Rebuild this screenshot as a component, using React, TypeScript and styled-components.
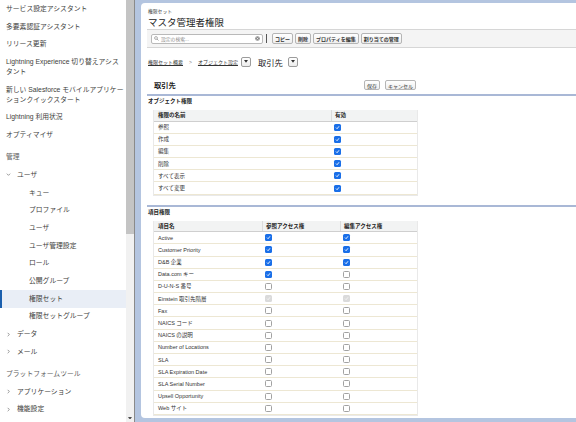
import * as React from "react";
import styled, { createGlobalStyle, css } from "styled-components";

const FONT = `"Liberation Sans", "Noto Sans CJK JP", sans-serif`;

const GlobalStyle = createGlobalStyle`
  html, body {
    margin: 0;
    padding: 0;
    width: 576px;
    height: 422px;
    overflow: hidden;
    background: #fff;
  }
  body {
    font-family: ${FONT};
    color: #333;
  }
  * {
    box-sizing: border-box;
  }
`;

const SShell = styled.div`
  display: flex;
  width: 576px;
  height: 422px;
  overflow: hidden;
`;

/* ---------- sidebar ---------- */

const SSidebar = styled.aside`
  display: flex;
  flex: 0 0 135px;
  height: 100%;
  background: #fff;
  border-right: 1px solid #8a8a8a;
`;

const SNav = styled.nav`
  flex: 1;
  min-width: 0;
  overflow: hidden;
`;

const SNavItem = styled.div<{ $level: number; $selected?: boolean }>`
  display: flex;
  align-items: flex-start;
  padding: 3.85px 1.5px 3.85px ${p => (p.$level === 2 ? 29 : 6)}px;
  font-size: 6.8px;
  line-height: 10px;
  color: #3e3e3c;
  background: ${p => (p.$selected ? "#e9eef6" : "transparent")};
  box-shadow: ${p => (p.$selected ? "inset 2px 0 0 #1b5fad" : "none")};
`;

const SNavSection = styled.div`
  margin-top: 4.5px;
  padding: 3.85px 6px;
  font-size: 6.8px;
  line-height: 10px;
  color: #5e5e5e;
`;

const SChevron = styled.span`
  display: inline-flex;
  align-items: center;
  flex: 0 0 11px;
  height: 10px;
`;

const SScrollbar = styled.div`
  display: flex;
  flex-direction: column;
  flex: 0 0 8px;
  background: #f1f1f1;
`;

const SThumb = styled.div`
  height: 234px;
  background: #c4c4c4;
`;

const STrack = styled.div`
  flex: 1;
`;

const SArrow = styled.div`
  display: flex;
  align-items: center;
  justify-content: center;
  height: 8px;
`;

/* ---------- main ---------- */

const SMain = styled.main`
  display: flex;
  flex: 1;
  min-width: 0;
  padding: 3px 0 4px 6px;
  background: #b4c5e0;
`;

const SPanel = styled.div`
  flex: 1;
  min-width: 0;
  overflow: hidden;
  background: #fff;
  border-radius: 4px 0 0 4px;
  padding: 6px 0 0 6px;
`;

const SEyebrow = styled.div`
  margin-left: 1px;
  font-size: 4.8px;
  line-height: 6px;
  color: #444;
`;

const STitle = styled.h1`
  margin: 1.5px 0 0 1px;
  font-size: 9.5px;
  line-height: 11px;
  font-weight: normal;
  color: #222;
`;

const SToolbar = styled.div`
  display: flex;
  align-items: center;
  gap: 2px;
  height: 19px;
  margin-top: 1.5px;
  padding: 0 4px;
  background: #f4f4f4;
  border-top: 1px solid #d6d6d6;
  border-bottom: 1px solid #d6d6d6;
`;

const SSearch = styled.div`
  display: flex;
  align-items: center;
  gap: 2px;
  width: 112px;
  height: 10px;
  padding: 0 2px;
  background: #fff;
  border: 1px solid #b9b9b9;
  border-radius: 2px;
  font-size: 4.8px;
  color: #8a8a8a;
`;

const SSearchText = styled.span`
  flex: 1;
`;

const SBar = styled.span`
  width: 1px;
  height: 9px;
  margin: 0 3px 0 1px;
  background: #555;
`;

const SButton = styled.button`
  display: inline-flex;
  align-items: center;
  height: 11px;
  padding: 0 2px;
  font-family: ${FONT};
  font-size: 5px;
  font-weight: bold;
  color: #333;
  background: linear-gradient(#ffffff, #eeeeee);
  border: 1px solid #b5b5b5;
  border-radius: 2px;
  white-space: nowrap;
`;

const SCrumbs = styled.div`
  display: flex;
  align-items: center;
  height: 11px;
  margin: 8px 0 0 1px;
  font-size: 5px;
`;

const SCrumbLink = styled.a`
  color: #333;
  text-decoration: underline;
`;

const SCrumbSep = styled.span`
  margin: 0 6px;
  color: #777;
`;

const SCrumbCurrent = styled.span`
  margin: 0 2px 0 7px;
  font-size: 8.3px;
  color: #222;
`;

const SDrop = styled.span`
  display: inline-flex;
  align-items: center;
  justify-content: center;
  width: 10px;
  height: 10px;
  margin-left: 3px;
  background: linear-gradient(#ffffff, #ececec);
  border: 1px solid #9c9c9c;
  border-radius: 2px;
`;

const SBlockHead = styled.div`
  display: flex;
  align-items: center;
  height: 18px;
  margin-top: 11px;
  padding: 0 0 2px 7px;
  border-bottom: 2px solid #a9b8d6;
`;

const SBlockTitle = styled.h2`
  flex: 0 0 210px;
  margin: 0;
  font-size: 7.3px;
  font-weight: bold;
  color: #222;
`;

const SBlockButtons = styled.div`
  display: flex;
  gap: 5px;
  & > button {
    height: 9.5px;
    font-weight: normal;
  }
`;

const SDivider = styled.div`
  height: 2px;
  margin-top: 9.5px;
  background: #a9b8d6;
`;

const SSectionTitle = styled.h3<{ $gap: number }>`
  margin: ${p => p.$gap}px 0 0 1px;
  font-size: 5.5px;
  line-height: 7px;
  font-weight: bold;
  color: #222;
`;

const STable = styled.div<{ $gap: number }>`
  width: 265px;
  margin: ${p => p.$gap}px 0 0 6px;
  border: 1px solid #e9e9e9;
  border-top: none;
`;

const SRow = styled.div<{ $cols: string; $head?: boolean }>`
  display: grid;
  grid-template-columns: ${p => p.$cols};
  align-items: center;
  height: ${p => (p.$head ? 11.5 : 12.2)}px;
  font-size: 5.5px;
  color: #333;
  ${p =>
    p.$head
      ? css`
          background: #f2f3f3;
          border-bottom: 1px solid #cfcfcf;
          font-weight: bold;
          color: #222;
        `
      : css`
          border-bottom: 1px solid #ede7d3;
        `}
`;

const SCell = styled.div<{ $head?: boolean; $first?: boolean }>`
  display: flex;
  align-items: center;
  height: 100%;
  padding-left: ${p => (p.$first ? 4 : 3)}px;
  white-space: nowrap;
  border-left: ${p => (p.$head && !p.$first ? "1px solid #dcdcdc" : "none")};
`;

type CheckState = "on" | "off" | "disabled";

const SCheck = styled.span<{ $state: CheckState }>`
  display: inline-flex;
  align-items: center;
  justify-content: center;
  width: 7px;
  height: 7px;
  border-radius: 1.5px;
  ${p =>
    p.$state === "on"
      ? css`
          background: #1a6fe8;
        `
      : p.$state === "disabled"
      ? css`
          background: #dadada;
        `
      : css`
          background: #fff;
          border: 1px solid #a2a2a2;
        `}
`;

/* ---------- small drawings ---------- */

const Chevron = ({ open }: { open?: boolean }) => (
  <svg width="5" height="5" viewBox="0 0 6 6">
    <path
      d={open ? "M1 2 L3 4 L5 2" : "M2 1 L4 3 L2 5"}
      fill="none"
      stroke="#666"
      strokeWidth="0.8"
    />
  </svg>
);

const Triangle = ({ size = 4, color = "#333" }: { size?: number; color?: string }) => (
  <svg width={size} height={size * 0.7} viewBox="0 0 4 2.8">
    <path d="M0 0 H4 L2 2.8 Z" fill={color} />
  </svg>
);

const SearchIcon = () => (
  <svg width="5" height="5" viewBox="0 0 6 6">
    <circle cx="2.4" cy="2.4" r="1.7" fill="none" stroke="#777" strokeWidth="0.7" />
    <path d="M3.7 3.7 L5.4 5.4" stroke="#777" strokeWidth="0.8" />
  </svg>
);

const ClearIcon = () => (
  <svg width="5" height="5" viewBox="0 0 6 6">
    <circle cx="3" cy="3" r="2.8" fill="#8c8c8c" />
    <path d="M1.9 1.9 L4.1 4.1 M4.1 1.9 L1.9 4.1" stroke="#fff" strokeWidth="0.7" />
  </svg>
);

const Checkbox = ({ state }: { state: CheckState }) => (
  <SCheck $state={state}>
    {state !== "off" && (
      <svg width="5" height="5" viewBox="0 0 5 5">
        <path
          d="M1 2.6 L2.1 3.7 L4 1.3"
          fill="none"
          stroke={state === "on" ? "#fff" : "#f4f4f4"}
          strokeWidth="0.9"
        />
      </svg>
    )}
  </SCheck>
);

/* ---------- data ---------- */

type NavEntry =
  | { kind: "section"; label: string }
  | { kind: "item"; label: string; level: number; open?: boolean; selected?: boolean };

const nav: NavEntry[] = [
  { kind: "item", label: "サービス設定アシスタント", level: 0 },
  { kind: "item", label: "多要素認証アシスタント", level: 0 },
  { kind: "item", label: "リリース更新", level: 0 },
  { kind: "item", label: "Lightning Experience 切り替えアシスタント", level: 0 },
  { kind: "item", label: "新しい Salesforce モバイルアプリケーションクイックスタート", level: 0 },
  { kind: "item", label: "Lightning 利用状況", level: 0 },
  { kind: "item", label: "オプティマイザ", level: 0 },
  { kind: "section", label: "管理" },
  { kind: "item", label: "ユーザ", level: 1, open: true },
  { kind: "item", label: "キュー", level: 2 },
  { kind: "item", label: "プロファイル", level: 2 },
  { kind: "item", label: "ユーザ", level: 2 },
  { kind: "item", label: "ユーザ管理設定", level: 2 },
  { kind: "item", label: "ロール", level: 2 },
  { kind: "item", label: "公開グループ", level: 2 },
  { kind: "item", label: "権限セット", level: 2, selected: true },
  { kind: "item", label: "権限セットグループ", level: 2 },
  { kind: "item", label: "データ", level: 1 },
  { kind: "item", label: "メール", level: 1 },
  { kind: "section", label: "プラットフォームツール" },
  { kind: "item", label: "アプリケーション", level: 1 },
  { kind: "item", label: "機能設定", level: 1 },
  { kind: "item", label: "Einstein", level: 1 },
];

const objectPerms = ["参照", "作成", "編集", "削除", "すべて表示", "すべて変更"];

const fieldPerms: [string, CheckState, CheckState][] = [
  ["Active", "on", "on"],
  ["Customer Priority", "on", "on"],
  ["D&B 企業", "on", "on"],
  ["Data.com キー", "on", "off"],
  ["D-U-N-S 番号", "off", "off"],
  ["Einstein 取引先階層", "disabled", "disabled"],
  ["Fax", "off", "off"],
  ["NAICS コード", "off", "off"],
  ["NAICS の説明", "off", "off"],
  ["Number of Locations", "off", "off"],
  ["SLA", "off", "off"],
  ["SLA Expiration Date", "off", "off"],
  ["SLA Serial Number", "off", "off"],
  ["Upsell Opportunity", "off", "off"],
  ["Web サイト", "off", "off"],
];

const OBJ_COLS = "177px 1fr";
const FIELD_COLS = "108px 78px 1fr";

/* ---------- app ---------- */

export default function App() {
  return (
    <>
      <GlobalStyle />
      <SShell>
        <SSidebar>
          <SNav>
            {nav.map((entry, i) =>
              entry.kind === "section" ? (
                <SNavSection key={i}>{entry.label}</SNavSection>
              ) : (
                <SNavItem key={i} $level={entry.level} $selected={entry.selected}>
                  {entry.level === 1 && (
                    <SChevron>
                      <Chevron open={entry.open} />
                    </SChevron>
                  )}
                  <span>{entry.label}</span>
                </SNavItem>
              )
            )}
          </SNav>
          <SScrollbar>
            <SThumb />
            <STrack />
            <SArrow>
              <Triangle size={4} color="#505050" />
            </SArrow>
          </SScrollbar>
        </SSidebar>

        <SMain>
          <SPanel>
            <SEyebrow>権限セット</SEyebrow>
            <STitle>マスタ管理者権限</STitle>

            <SToolbar>
              <SSearch>
                <SearchIcon />
                <SSearchText>設定の検索...</SSearchText>
                <ClearIcon />
              </SSearch>
              <SBar />
              <SButton>コピー</SButton>
              <SButton>削除</SButton>
              <SButton>プロパティを編集</SButton>
              <SButton>割り当ての管理</SButton>
            </SToolbar>

            <SCrumbs>
              <SCrumbLink>権限セット概要</SCrumbLink>
              <SCrumbSep>&gt;</SCrumbSep>
              <SCrumbLink>オブジェクト設定</SCrumbLink>
              <SDrop>
                <Triangle />
              </SDrop>
              <SCrumbCurrent>取引先</SCrumbCurrent>
              <SDrop>
                <Triangle />
              </SDrop>
            </SCrumbs>

            <SBlockHead>
              <SBlockTitle>取引先</SBlockTitle>
              <SBlockButtons>
                <SButton>保存</SButton>
                <SButton>キャンセル</SButton>
              </SBlockButtons>
            </SBlockHead>

            <SSectionTitle $gap={1.5}>オブジェクト権限</SSectionTitle>
            <STable $gap={5.5}>
              <SRow $cols={OBJ_COLS} $head>
                <SCell $head $first>権限の名前</SCell>
                <SCell $head>有効</SCell>
              </SRow>
              {objectPerms.map(name => (
                <SRow key={name} $cols={OBJ_COLS}>
                  <SCell $first>{name}</SCell>
                  <SCell>
                    <Checkbox state="on" />
                  </SCell>
                </SRow>
              ))}
            </STable>

            <SDivider />
            <SSectionTitle $gap={2}>項目権限</SSectionTitle>
            <STable $gap={4.5}>
              <SRow $cols={FIELD_COLS} $head>
                <SCell $head $first>項目名</SCell>
                <SCell $head>参照アクセス権</SCell>
                <SCell $head>編集アクセス権</SCell>
              </SRow>
              {fieldPerms.map(([name, read, edit]) => (
                <SRow key={name} $cols={FIELD_COLS}>
                  <SCell $first>{name}</SCell>
                  <SCell>
                    <Checkbox state={read} />
                  </SCell>
                  <SCell>
                    <Checkbox state={edit} />
                  </SCell>
                </SRow>
              ))}
            </STable>
          </SPanel>
        </SMain>
      </SShell>
    </>
  );
}
